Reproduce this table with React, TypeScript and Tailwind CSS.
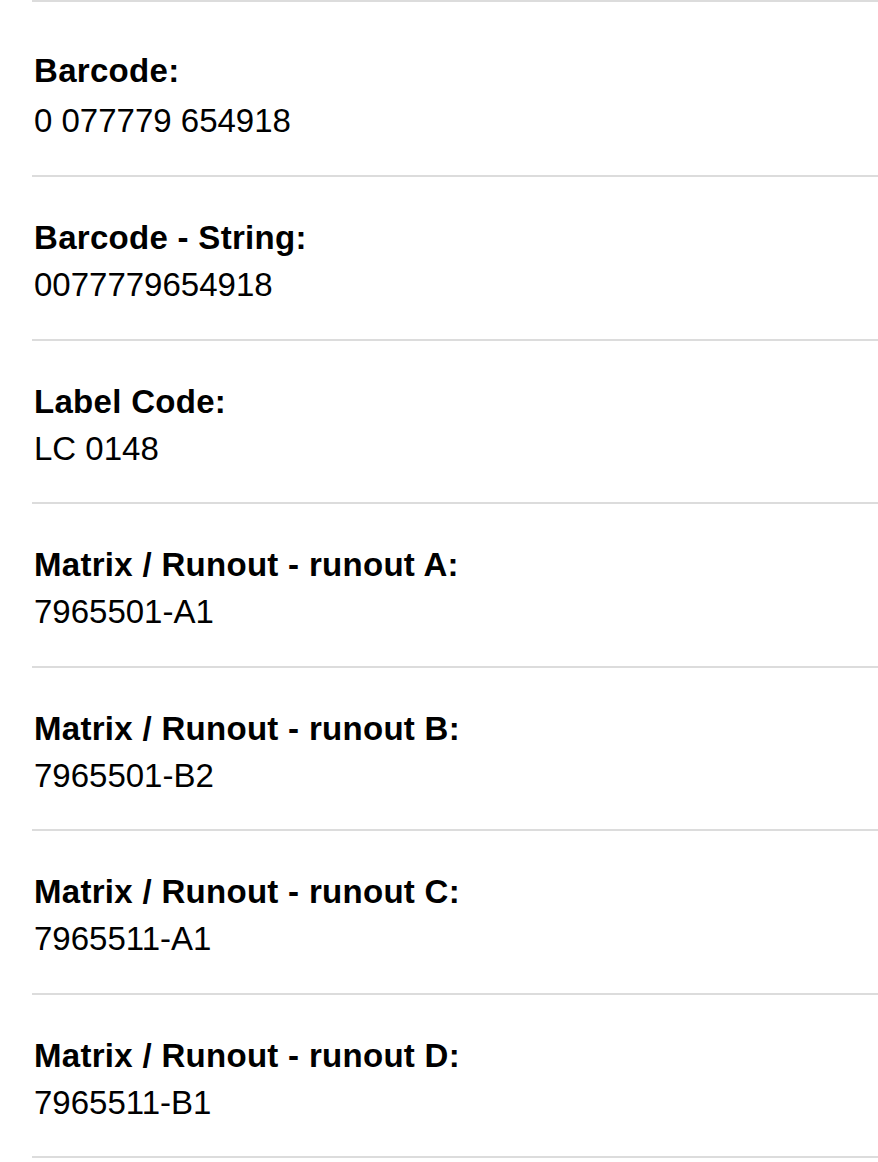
const rows = [
  { label: "Barcode:", value: "0 077779 654918" },
  { label: "Barcode - String:", value: "0077779654918" },
  { label: "Label Code:", value: "LC 0148" },
  { label: "Matrix / Runout - runout A:", value: "7965501-A1" },
  { label: "Matrix / Runout - runout B:", value: "7965501-B2" },
  { label: "Matrix / Runout - runout C:", value: "7965511-A1" },
  { label: "Matrix / Runout - runout D:", value: "7965511-B1" },
];

export default function App() {
  return (
    <div
      className="min-h-[1162px] w-[878px] overflow-hidden bg-white text-black"
      style={{ fontFamily: '"Liberation Sans", Arial, sans-serif' }}
    >
      <div className="ml-8 border-t-2 border-[#dcdcdc]">
        {rows.map((row, i) => (
          <div
            key={row.label}
            className={
              i === 0
                ? "border-b-2 border-[#dcdcdc] pl-[2px] pt-[49px] pb-[34px]"
                : "border-b-2 border-[#dcdcdc] pl-[2px] pt-[41px] pb-[33.5px]"
            }
          >
            <div className="text-[33px] font-bold leading-[40px] tracking-[0.3px]">
              {row.label}
            </div>
            <div
              className={
                i === 0
                  ? "mt-[10px] text-[33px] leading-[40px]"
                  : "mt-[7px] text-[33px] leading-[40px]"
              }
            >
              {row.value}
            </div>
          </div>
        ))}
      </div>
    </div>
  );
}
